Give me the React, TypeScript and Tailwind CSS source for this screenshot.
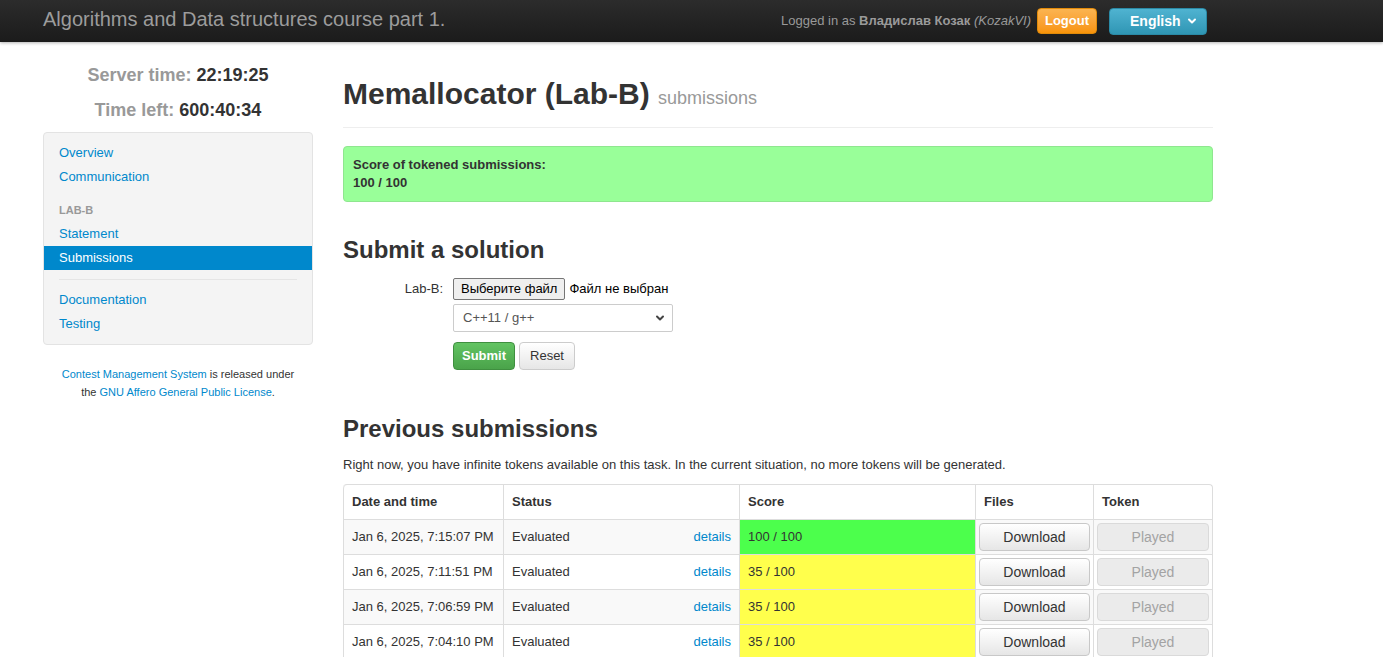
import React from 'react';

interface Submission {
    time: string;
    score: string;
    full: boolean;
}

const submissions: Submission[] = [
    { time: 'Jan 6, 2025, 7:15:07 PM', score: '100 / 100', full: true },
    { time: 'Jan 6, 2025, 7:11:51 PM', score: '35 / 100', full: false },
    { time: 'Jan 6, 2025, 7:06:59 PM', score: '35 / 100', full: false },
    { time: 'Jan 6, 2025, 7:04:10 PM', score: '35 / 100', full: false },
];

const Chevron = ({ className }: { className?: string }) => (
    <svg viewBox="0 0 12 12" className={className} fill="none" stroke="currentColor" strokeWidth="2" strokeLinecap="round" strokeLinejoin="round">
        <path d="M3 4.5 6 7.5 9 4.5" />
    </svg>
);

const Navbar = () => (
    <div className="h-[42px] bg-gradient-to-b from-[#2c2c2c] to-[#1b1b1b] shadow-[0_1px_3px_rgba(0,0,0,0.3)] flex items-center justify-between pl-[43px] pr-[176px]">
        <span className="text-[20px] text-[#9c9c9c] leading-[24px] -mt-[4px]">Algorithms and Data structures course part 1.</span>
        <div className="flex items-center">
            <span className="text-[13px] text-[#999] mr-[6px]">
                Logged in as <b className="text-[#9a9a9a]">Владислав Козак</b> <i>(KozakVI)</i>
            </span>
            <button className="h-[26px] w-[60px] -mt-[1px] rounded-[4px] border border-[#e08a0a] bg-gradient-to-b from-[#fbb450] to-[#f89406] text-white text-[13px] font-bold">
                Logout
            </button>
            <button className="ml-[12px] h-[27px] w-[98px] rounded-[4px] border border-[#2a8aa6] bg-gradient-to-b from-[#4fb3d1] to-[#2f96b4] text-white text-[14px] font-bold flex items-center pl-[20px] pr-[8px] justify-between">
                English
                <Chevron className="w-[12px] h-[12px]" />
            </button>
        </div>
    </div>
);

const NavLink = ({ label, active }: { label: string; active?: boolean }) => (
    <a
        className={
            active
                ? 'block px-[15px] py-[3px] leading-[18px] bg-[#0088cc] text-white'
                : 'block px-[15px] py-[3px] leading-[18px] text-[#0088cc]'
        }
    >
        {label}
    </a>
);

const Sidebar = () => (
    <div className="w-[270px] shrink-0 pt-[21px]">
        <div className="text-center text-[18px] leading-[24px] font-bold">
            <div className="text-[#999]">
                Server time: <span className="text-[#333]">22:19:25</span>
            </div>
            <div className="text-[#999] mt-[11px]">
                Time left: <span className="text-[#333]">600:40:34</span>
            </div>
        </div>
        <div className="mt-[10px] bg-[#f4f4f4] border border-[#e3e3e3] rounded-[4px] pt-[8px] pb-[8px]">
            <NavLink label="Overview" />
            <NavLink label="Communication" />
            <div className="mt-[9px] px-[15px] py-[3px] leading-[18px] text-[11px] font-bold uppercase text-[#999]">Lab-B</div>
            <NavLink label="Statement" />
            <NavLink label="Submissions" active />
            <div className="mt-[9px] mb-[8px] mx-[15px] h-px bg-[#e5e5e5]" />
            <NavLink label="Documentation" />
            <NavLink label="Testing" />
        </div>
        <p className="mt-[20px] text-center text-[11px] leading-[18px] text-[#333]">
            <a className="text-[#0088cc]">Contest Management System</a> is released under
            <br />
            the <a className="text-[#0088cc]">GNU Affero General Public License</a>.
        </p>
    </div>
);

const SubmitForm = () => (
    <div className="mt-[10px] flex">
        <label className="w-[100px] text-right pt-[2px] leading-[18px] text-[#333]">Lab-B:</label>
        <div className="ml-[10px]">
            <div className="flex items-center h-[22px]">
                <button className="h-[22px] px-[7px] bg-[#efefef] border border-[#767676] rounded-[2px] text-[13px] text-black leading-[18px]">
                    Выберите файл
                </button>
                <span className="ml-[4px] text-[13px] text-black">Файл не выбран</span>
            </div>
            <div className="mt-[4px] w-[220px] h-[28px] border border-[#ccc] rounded-[2px] bg-white flex items-center justify-between pl-[9px] pr-[6px] text-[13px] text-[#555]">
                C++11 / g++
                <Chevron className="w-[12px] h-[12px] text-[#444]" />
            </div>
            <div className="mt-[10px] flex gap-[4px]">
                <button className="h-[28px] w-[62px] rounded-[4px] border border-[#3f8f3f] bg-gradient-to-b from-[#62c462] to-[#4aa34a] text-white font-bold text-[13px]">
                    Submit
                </button>
                <button className="h-[28px] w-[56px] rounded-[4px] border border-[#ccc] bg-gradient-to-b from-white to-[#e6e6e6] text-[#333] text-[13px]">
                    Reset
                </button>
            </div>
        </div>
    </div>
);

const SubmissionsTable = () => (
    <table className="mt-[10px] w-[870px] table-fixed border-separate border-spacing-0 border border-l-0 border-b-0 border-[#ddd] rounded-t-[4px] text-[13px] leading-[18px] text-[#333]">
        <colgroup>
            <col className="w-[160px]" />
            <col className="w-[236px]" />
            <col className="w-[236px]" />
            <col className="w-[118px]" />
            <col className="w-[119px]" />
        </colgroup>
        <thead>
            <tr className="text-left font-bold">
                <th className="border-l border-[#ddd] px-[8px] py-[8px] rounded-tl-[4px]">Date and time</th>
                <th className="border-l border-[#ddd] px-[8px] py-[8px]">Status</th>
                <th className="border-l border-[#ddd] px-[8px] py-[8px]">Score</th>
                <th className="border-l border-[#ddd] px-[8px] py-[8px]">Files</th>
                <th className="border-l border-[#ddd] px-[8px] py-[8px]">Token</th>
            </tr>
        </thead>
        <tbody>
            {submissions.map((s, i) => (
                <tr key={s.time} className={i % 2 === 0 ? 'bg-[#f9f9f9]' : 'bg-white'}>
                    <td className="border-l border-t border-[#ddd] px-[8px] py-[8px]">{s.time}</td>
                    <td className="border-l border-t border-[#ddd] px-[8px] py-[8px]">
                        <div className="flex justify-between">
                            <span>Evaluated</span>
                            <a className="text-[#0088cc]">details</a>
                        </div>
                    </td>
                    <td className={`border-l border-t border-[#ddd] px-[8px] py-[8px] ${s.full ? 'bg-[#4cff4c]' : 'bg-[#ffff4c]'}`}>
                        {s.score}
                    </td>
                    <td className="border-l border-t border-[#ddd] px-[3px] py-[3px]">
                        <button className="w-full h-[28px] rounded-[4px] border border-[#c8c8c8] bg-gradient-to-b from-white to-[#e6e6e6] text-[14px] text-[#333]">
                            Download
                        </button>
                    </td>
                    <td className="border-l border-t border-[#ddd] px-[3px] py-[3px]">
                        <button className="w-full h-[28px] rounded-[4px] border border-[#dadada] bg-[#ebebeb] text-[14px] text-[#a3a3a3]">
                            Played
                        </button>
                    </td>
                </tr>
            ))}
        </tbody>
    </table>
);

const Main = () => (
    <div className="w-[870px] shrink-0 pt-[32px]">
        <div className="pb-[9px] border-b border-[#eee]">
            <h1 className="text-[30px] leading-[40px] font-bold text-[#333]">
                Memallocator (Lab-B) <span className="text-[18px] font-normal text-[#999]">submissions</span>
            </h1>
        </div>
        <div className="mt-[18px] bg-[#99ff99] border border-[#8fe68f] rounded-[4px] px-[9px] py-[9px] font-bold text-[13px] leading-[18px] text-[#333]">
            Score of tokened submissions:
            <br />
            100 / 100
        </div>
        <h2 className="mt-[30px] text-[24px] leading-[36px] font-bold text-[#333]">Submit a solution</h2>
        <SubmitForm />
        <h2 className="mt-[41px] text-[24px] leading-[36px] font-bold text-[#333]">Previous submissions</h2>
        <p className="mt-[9px] leading-[18px] text-[#333]">
            Right now, you have infinite tokens available on this task. In the current situation, no more tokens will be generated.
        </p>
        <SubmissionsTable />
    </div>
);

export default function App() {
    return (
        <div className="h-[657px] overflow-hidden bg-white text-[13px] text-[#333] font-['Liberation_Sans',Arial,sans-serif]">
            <Navbar />
            <div className="flex gap-[30px] pl-[43px]">
                <Sidebar />
                <Main />
            </div>
        </div>
    );
}
